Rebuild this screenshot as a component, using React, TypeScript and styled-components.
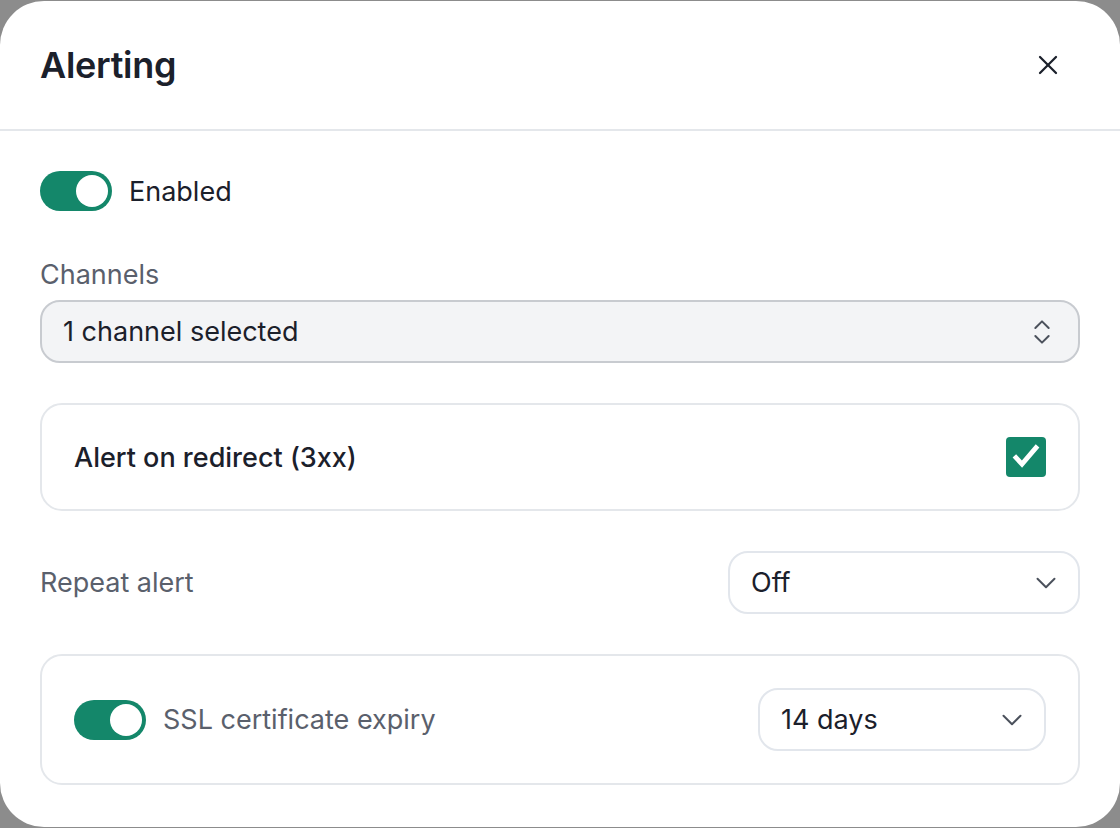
import React, { useState } from 'react';
import styled, { createGlobalStyle } from 'styled-components';
import { X, ChevronDown, ChevronsUpDown } from 'lucide-react';

const GlobalStyle = createGlobalStyle`
  html, body {
    margin: 0;
    padding: 0;
    background: #8c8c8c;
  }
  body {
    padding: 1px 0;
    font-family: Inter, "Noto Sans", sans-serif;
    color: #1b202b;
  }
  * {
    box-sizing: border-box;
  }
`;

const green = '#14876a';

const Dialog = styled.div`
  width: 1120px;
  height: 826px;
  background: #ffffff;
  border-radius: 44px;
  overflow: hidden;
  display: flex;
  flex-direction: column;
`;

const Header = styled.header`
  height: 130px;
  flex-shrink: 0;
  padding: 0 40px;
  display: flex;
  align-items: center;
  justify-content: space-between;
  border-bottom: 2px solid #e4e7eb;
`;

const Title = styled.h2`
  margin: 0;
  font-size: 36px;
  font-weight: 600;
  letter-spacing: -0.3px;
  color: #1b202b;
`;

const CloseButton = styled.button`
  width: 40px;
  height: 40px;
  margin-right: 12px;
  border: none;
  background: none;
  padding: 0;
  display: flex;
  align-items: center;
  justify-content: center;
  color: #1b202b;
  cursor: pointer;
`;

const Body = styled.div`
  padding: 40px 40px 0;
  display: flex;
  flex-direction: column;
  gap: 40px;
`;

const Row = styled.div`
  display: flex;
  align-items: center;
  gap: 17px;
`;

const SwitchTrack = styled.button<{ $on: boolean }>`
  width: 72px;
  height: 40px;
  padding: 4px;
  border: none;
  border-radius: 20px;
  background: ${(p) => (p.$on ? green : '#d1d5db')};
  display: flex;
  justify-content: ${(p) => (p.$on ? 'flex-end' : 'flex-start')};
  cursor: pointer;
  flex-shrink: 0;
`;

const SwitchKnob = styled.span`
  width: 32px;
  height: 32px;
  border-radius: 50%;
  background: #ffffff;
`;

const Text = styled.span<{ $muted?: boolean; $weight?: number }>`
  font-size: 27px;
  font-weight: ${(p) => p.$weight ?? 400};
  color: ${(p) => (p.$muted ? '#5a606c' : '#1b202b')};
`;

const Field = styled.div`
  display: flex;
  flex-direction: column;
  gap: 8px;
  margin-top: 7px;
`;

const Label = styled.label`
  font-size: 27px;
  line-height: 34px;
  color: #5a606c;
`;

const SelectBox = styled.div<{ $filled?: boolean; $width?: number }>`
  height: 63px;
  width: ${(p) => (p.$width ? `${p.$width}px` : '100%')};
  padding: 0 15px 0 21px;
  border-radius: 20px;
  border: 2px solid ${(p) => (p.$filled ? '#c8cbd0' : '#e2e6ec')};
  background: ${(p) => (p.$filled ? '#f3f4f6' : '#ffffff')};
  display: flex;
  align-items: center;
  justify-content: space-between;
  font-size: 27px;
  color: #1b202b;
  flex-shrink: 0;
  svg {
    color: #4b515c;
  }
`;

const UpDown = styled(ChevronsUpDown)`
  margin-right: 5px;
`;

const Card = styled.div<{ $height: number }>`
  height: ${(p) => p.$height}px;
  flex-shrink: 0;
  border: 2px solid #e4e7eb;
  border-radius: 22px;
  padding: 0 32px;
  display: flex;
  align-items: center;
  justify-content: space-between;
`;

const Checkbox = styled.span`
  width: 40px;
  height: 40px;
  border-radius: 4px;
  background: ${green};
  display: flex;
  align-items: center;
  justify-content: center;
`;

const SpreadRow = styled.div`
  display: flex;
  align-items: center;
  justify-content: space-between;
`;

const Switch = ({ on, onToggle }: { on: boolean; onToggle: () => void }) => (
  <SwitchTrack $on={on} onClick={onToggle}>
    <SwitchKnob />
  </SwitchTrack>
);

export default function App() {
  const [enabled, setEnabled] = useState(true);
  const [ssl, setSsl] = useState(true);

  return (
    <>
      <GlobalStyle />
      <Dialog>
        <Header>
          <Title>Alerting</Title>
          <CloseButton aria-label="Close">
            <X size={32} strokeWidth={1.7} />
          </CloseButton>
        </Header>
        <Body>
          <Row>
            <Switch on={enabled} onToggle={() => setEnabled(!enabled)} />
            <Text>Enabled</Text>
          </Row>

          <Field>
            <Label>Channels</Label>
            <SelectBox $filled>
              <span>1 channel selected</span>
              <UpDown size={32} strokeWidth={1.5} />
            </SelectBox>
          </Field>

          <Card $height={108}>
            <Text $weight={500}>Alert on redirect (3xx)</Text>
            <Checkbox>
              <svg width="32" height="32" viewBox="0 0 24 24">
                <path
                  d="M4.5 12.5l4.5 4.8L19.5 5"
                  fill="none"
                  stroke="#ffffff"
                  strokeWidth="3.6"
                  strokeLinecap="square"
                />
              </svg>
            </Checkbox>
          </Card>

          <SpreadRow>
            <Label>Repeat alert</Label>
            <SelectBox $width={352}>
              <span>Off</span>
              <ChevronDown size={34} strokeWidth={1.4} />
            </SelectBox>
          </SpreadRow>

          <Card $height={131}>
            <Row>
              <Switch on={ssl} onToggle={() => setSsl(!ssl)} />
              <Text $muted>SSL certificate expiry</Text>
            </Row>
            <SelectBox $width={288}>
              <span>14 days</span>
              <ChevronDown size={34} strokeWidth={1.4} />
            </SelectBox>
          </Card>
        </Body>
      </Dialog>
    </>
  );
}
